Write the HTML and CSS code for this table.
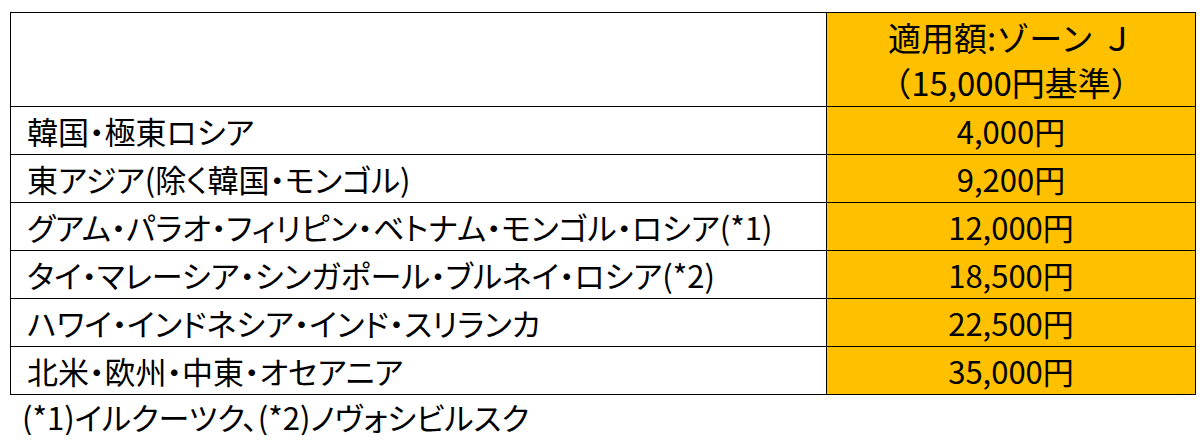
FILE: index.html
```html
<!DOCTYPE html>
<html lang="ja">
<head>
<meta charset="utf-8">
<link rel="stylesheet" href="styles.css">
</head>
<body>
<div class="page">
  <table class="zones">
    <colgroup><col class="c-region"><col class="c-amount"></colgroup>
    <thead>
      <tr>
        <th class="blank"></th>
        <th class="amount head">適用額:ゾーン Ｊ<br>（15,000円基準）</th>
      </tr>
    </thead>
    <tbody>
      <tr><td class="region">韓国・極東ロシア</td><td class="amount">4,000円</td></tr>
      <tr><td class="region">東アジア(除く韓国・モンゴル)</td><td class="amount">9,200円</td></tr>
      <tr><td class="region">グアム・パラオ・フィリピン・ベトナム・モンゴル・ロシア(*1)</td><td class="amount">12,000円</td></tr>
      <tr><td class="region">タイ・マレーシア・シンガポール・ブルネイ・ロシア(*2)</td><td class="amount">18,500円</td></tr>
      <tr><td class="region">ハワイ・インドネシア・インド・スリランカ</td><td class="amount">22,500円</td></tr>
      <tr><td class="region">北米・欧州・中東・オセアニア</td><td class="amount">35,000円</td></tr>
    </tbody>
  </table>
  <p class="note">(*1)イルクーツク、(*2)ノヴォシビルスク</p>
</div>
</body>
</html>
```
FILE: styles.css
```css
html, body {
  margin: 0;
  padding: 0;
  background: #fff;
}
body {
  font-family: "Noto Sans CJK JP", "Noto Sans", sans-serif;
  color: #000;
  font-feature-settings: "palt";
}
.page {
  padding: 12px 0 0 10px;
}
.zones {
  border-collapse: collapse;
  width: 1185px;
  table-layout: fixed;
}
.c-region { width: 816px; }
.c-amount { width: 369px; }
.zones th, .zones td {
  border: 1px solid #000;
  padding: 0;
  font-weight: normal;
  font-size: 31px;
  line-height: 46px;
  height: 47px;
}
.zones th {
  height: 93px;
  line-height: 45px;
}
.zones .head {
  font-size: 33px;
  font-feature-settings: normal;
}
.region {
  padding-left: 16px !important;
  text-align: left;
  white-space: nowrap;
}
.amount {
  background: #ffc000;
  text-align: center;
}
.note {
  margin: 4px 0 0 12px;
  font-size: 31px;
  line-height: 36px;
}
```
